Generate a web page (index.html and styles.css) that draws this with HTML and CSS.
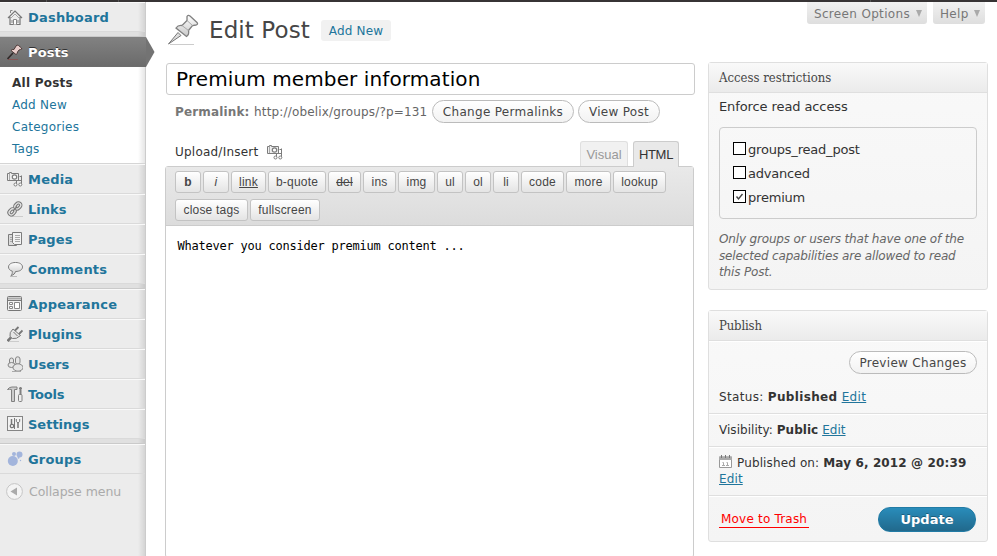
FILE: index.html
```html
<!DOCTYPE html>
<html lang="en">
<head>
<meta charset="utf-8">
<title>Edit Post</title>
<link rel="stylesheet" href="styles.css">
</head>
<body>
<svg class="defs" aria-hidden="true">
  <defs>
    <linearGradient id="metal" x1="0" y1="0" x2="0" y2="1"><stop offset="0" stop-color="#fff"/><stop offset="1" stop-color="#c8c8c8"/></linearGradient>
    <symbol id="media" viewBox="0 0 16 16">
      <path d="M.5 2.500h2v-1h2v1h7v7h-11z" fill="#eee" stroke="#7c7c7c"/>
      <path d="M2.500 3v6" stroke="#aaa"/>
      <circle cx="7.500" cy="6" r="2.200" fill="#fff" stroke="#7c7c7c" stroke-width="1.200"/>
      <path d="M9.500 13.500v-4h5M14.500 13.500v-9M14.500 5.500h-2" fill="none" stroke="#7c7c7c"/>
      <circle cx="8.500" cy="13.500" r="1.500" fill="#fff" stroke="#7c7c7c"/><circle cx="13.300" cy="13.500" r="1.500" fill="#fff" stroke="#7c7c7c"/>
    </symbol>
    <symbol id="pin" viewBox="0 0 32 32">
      <path d="M3 30.500h24" stroke="#ccc"/>
      <path d="M1.500 30L11 18.500l3 3z" fill="#ddd" stroke="#777" stroke-width="1"/>
      <path d="M20 2.500q1-2 3-.500l7 6.500q1.500 2-1 2.500l-3.500.500-4 5q1 4-2 6L9 14q2-3 6-2.500l5-5z" fill="url(#metal)" stroke="#808080" stroke-width="1.300"/>
      <path d="M20 6.500l5.500 5M15 11.500l6.500 5" stroke="#aaa" fill="none"/>
    </symbol>
  </defs>
</svg>
<div class="adminbar"><i></i><i></i><i></i></div>
<div class="wrap">
  <nav class="menu">
    <a class="item"><svg viewBox="0 0 16 16"><path d="M3 8v7.500h10V8M1 9l7-7 7 7" fill="#eee" stroke="#777" stroke-width="1.200"/><path d="M3.500 4V1.500h2" fill="none" stroke="#888"/><path d="M3.500 9.500L8 5l4.500 4.500" fill="none" stroke="#aaa"/><path d="M6.500 15.500v-5h3v5M5 11v3M11 11v3" fill="#fff" stroke="#888"/></svg><span>Dashboard</span></a>
    <div class="sep"></div>
    <a class="item current"><svg viewBox="0 0 16 16"><path d="M1 15.500h10" stroke="#855"/><path d="M.5 15L6 9" stroke="#302828" stroke-width="1.600"/><path d="M9 2q1-1.500 2.500-.500l3 2.500q1 1.500-1 1.500l-1.500.500-1.500 2q0 2-1.500 2.500L4 6.500q1-1.500 3-1z" fill="#e8cdca" stroke="#4d3a38"/></svg><span>Posts</span></a>
    <div class="submenu"><a class="on">All Posts</a><a>Add New</a><a>Categories</a><a>Tags</a></div>
    <a class="item"><svg><use href="#media"/></svg><span>Media</span></a>
    <a class="item tight"><svg viewBox="0 0 16 16"><path d="M3 15.500h13" stroke="#ccc"/><g fill="none" stroke="#777" stroke-width="3.400"><rect x="8.500" y="1.800" width="4.600" height="6.500" rx="2.300" transform="rotate(43 11 5)"/><rect x="2.600" y="7.600" width="4.600" height="6.500" rx="2.300" transform="rotate(43 5 11)"/></g><g fill="none" stroke="#e2e2e2" stroke-width="1.300"><rect x="8.500" y="1.800" width="4.600" height="6.500" rx="2.300" transform="rotate(43 11 5)"/><rect x="2.600" y="7.600" width="4.600" height="6.500" rx="2.300" transform="rotate(43 5 11)"/></g><path d="M6 10l4-4.500" stroke="#777" stroke-width="1.200"/></svg><span>Links</span></a>
    <a class="item"><svg viewBox="0 0 16 16"><path d="M5 3.500H1.500v11h8V13" fill="#ddd" stroke="#7c7c7c"/><path d="M5.500 1.500h9v12h-7l-2-2z" fill="#f3f3f3" stroke="#7c7c7c"/><path d="M8 4.500h5M8 6.500h5M8 8.500h5M8 10.500h5M3 6.500h2M3 8.500h2M3 10.500h2" stroke="#aaa"/></svg><span>Pages</span></a>
    <a class="item"><svg viewBox="0 0 16 16"><path d="M3 15.500h7" stroke="#bbb"/><path d="M8.500 1.500C4 1.500 1.500 3.500 1.500 6c0 2 1.500 3.500 3.800 4.200.2 2-.3 3.300-1.300 4.300 2.500-.4 4-1.800 4.500-4 4.500 0 7-2 7-4.500s-2.500-4.500-7-4.500z" fill="url(#metal)" stroke="#7c7c7c"/></svg><span>Comments</span></a>
    <div class="sep"></div>
    <a class="item"><svg viewBox="0 0 16 16"><rect x=".5" y=".5" width="14" height="14" rx="1" fill="#f2f2f2" stroke="#777"/><path d="M1 2.500h13" stroke="#aaa" stroke-width="2"/><path d="M1 4.500h13" stroke="#777"/><path d="M2.500 6.500h3v2h-3zM2.500 10.500h3v2h-3zM7.500 6.500h5v6h-5z" fill="#fff" stroke="#888"/></svg><span>Appearance</span></a>
    <a class="item tight"><svg viewBox="0 0 16 16"><path d="M1 15.500h11" stroke="#ccc"/><path d="M.5 15L4 11.500" stroke="#777" stroke-width="2.500"/><path d="M6 3l7.500 6.500q-4 4-8 3L3 10.500q-1-4 3-7.500z" fill="#e5e5e5" stroke="#777"/><path d="M8 4.500L11.500 1M12 8l3.500-3.500" stroke="#777" stroke-width="1.800"/><path d="M6.500 6l4 4" stroke="#777"/></svg><span>Plugins</span></a>
    <a class="item tight"><svg viewBox="0 0 16 16"><g fill="#e5e5e5" stroke="#858585"><rect x="2.500" y="2" width="4" height="6" rx="2"/><ellipse cx="4.500" cy="9" rx="3.500" ry="2.500"/><rect x="8.500" y=".8" width="4.500" height="7.500" rx="2.200"/><ellipse cx="11" cy="11.500" rx="5" ry="3.700"/></g><path d="M5 15.500h9" stroke="#aaa"/></svg><span>Users</span></a>
    <a class="item tighter"><svg viewBox="0 0 16 16"><path d="M.5 3.500Q2 1 5 1h5v2.500H7.500v12h-3v-12q-2-.5-4 0z" fill="#ccc" stroke="#808080"/><path d="M13.500 1v8" stroke="#808080" stroke-width="2"/><path d="M12 2.500h3" stroke="#808080"/><rect x="11.500" y="8.500" width="3.500" height="7" rx="1" fill="#eee" stroke="#808080"/></svg><span>Tools</span></a>
    <a class="item tight"><svg viewBox="0 0 16 16"><rect x=".5" y=".5" width="15" height="14" fill="#f2f2f2" stroke="#858585"/><path d="M4.500 3v5M11 7v5" stroke="#777" stroke-width="1.500"/><circle cx="5" cy="10" r="1.700" fill="#fff" stroke="#777" stroke-width="1.300"/><path d="M9.300 3v2.500L11 7l1.700-1.500V3M7.500 2v11" fill="none" stroke="#777"/></svg><span>Settings</span></a>
    <div class="sep"></div>
    <a class="item"><svg viewBox="0 0 16 16"><g fill="#a3b5dc"><circle cx="5.800" cy="10" r="5"/><circle cx="12.500" cy="3.500" r="3"/><circle cx="7" cy="3" r="2"/><circle cx="11.500" cy="6.800" r="1"/><circle cx="13.500" cy="9.500" r=".7"/></g></svg><span>Groups</span></a>
    <a class="collapse"><svg viewBox="0 0 17 17"><circle cx="8.500" cy="8.500" r="7.900" fill="#f4f4f4" stroke="#c5c5c5"/><path d="M4.500 8.500L11 4.500v8z" fill="#aaa"/></svg><span>Collapse menu</span></a>
  </nav>
  <svg class="arrow" viewBox="0 0 9 30"><path d="M0 0l8.500 15L0 30z" fill="#737373"/></svg>

  <main class="main">
    <header class="head"><svg><use href="#pin"/></svg><h1>Edit Post</h1><a class="addnew">Add New</a></header>
    <div class="title"><span>Premium member information</span></div>
    <div class="permalink"><b>Permalink:</b><span class="url">http://obelix/groups/?p=131</span><a class="pill change">Change Permalinks</a><a class="pill view">View Post</a></div>
    <div class="tools"><span class="upload">Upload/Insert</span><svg><use href="#media"/></svg><a class="tab visual">Visual</a><a class="tab html">HTML</a></div>
    <section class="editor">
      <div class="toolbar">
        <a class="w26"><b>b</b></a><a class="w26"><em>i</em></a><a class="w35"><u>link</u></a><a class="w58">b-quote</a><a class="w33"><s>del</s></a><a class="w33">ins</a><a class="w37">img</a><a class="w26">ul</a><a class="w26">ol</a><a class="w26">li</a><a class="w43">code</a><a class="w45">more</a><a class="w53">lookup</a><a class="w73">close tags</a><a class="w70">fullscreen</a>
      </div>
      <div class="text">Whatever you consider premium content ...</div>
    </section>
  </main>

  <aside class="side">
    <div class="screen"><a class="so">Screen Options<i></i></a><a class="help">Help<i></i></a></div>
    <section class="box access">
      <h3>Access restrictions</h3>
      <p class="enforce">Enforce read access</p>
      <div class="caps">
        <label><i></i><span>groups_read_post</span></label>
        <label><i></i><span>advanced</span></label>
        <label><i><svg viewBox="0 0 11 11"><path d="M2.500 5.500l2 2.500L8.500 3" fill="none" stroke="#444" stroke-width="1.400"/></svg></i><span>premium</span></label>
      </div>
      <p class="note">Only groups or users that have one of the<br>selected capabilities are allowed to read<br>this Post.</p>
    </section>
    <section class="box publish">
      <h3>Publish</h3>
      <div class="preview"><a class="pill">Preview Changes</a></div>
      <div class="row status">Status: <b>Published</b> <a>Edit</a></div>
      <div class="row visibility">Visibility: <b>Public</b> <a>Edit</a></div>
      <div class="row date"><svg viewBox="0 0 13 13"><path d="M.5 2h12v10.500H.5z" fill="#fff" stroke="#999"/><path d="M0 1.500h13V5H0z" fill="#aaa"/><path d="M2.500 0v3M6.500 0v3M10.500 0v3" stroke="#777"/><path d="M3.500 7.500h1v3M3 10.500h3M7.500 7.500h1v3M7 10.500h3" fill="none" stroke="#aaa"/></svg><span>Published on: <b>May 6, 2012 @ 20:39</b></span><br><a>Edit</a></div>
      <div class="actions"><a class="trash">Move to Trash</a><a class="update">Update</a></div>
    </section>
  </aside>
</div>
</body>
</html>
```
FILE: styles.css
```css
* { box-sizing: border-box; }
body { margin: 0; width: 997px; height: 556px; overflow: hidden; background: #fff; color: #333; font: 13px "DejaVu Sans", sans-serif; }
h1, h3, p { margin: 0; font-weight: normal; }
a, span { white-space: nowrap; }
.defs { position: absolute; width: 0; height: 0; }
.adminbar { height: 2px; background: #373435; display: flex; }
.adminbar i { border-right: 1px solid #555; width: 47px; }
.adminbar i:nth-child(2) { width: 72px; }
.adminbar i:nth-child(3) { width: 752px; }
.wrap { display: flex; height: 554px; position: relative; }

.menu { width: 146px; flex: none; background: linear-gradient(to right, transparent 138px, rgba(0,0,0,.1)) #ececec; border-right: 1px solid #ccc; }
.item { display: flex; align-items: center; height: 30px; padding-left: 7px; border-top: 1px solid #f9f9f9; border-bottom: 1px solid #dadada; color: #21759b; font-weight: bold; letter-spacing: .2px; }
.tight { letter-spacing: 0; }
.tighter { letter-spacing: -.2px; }
.item svg { width: 16px; height: 16px; margin-right: 5px; flex: none; }
.sep { height: 5px; background: rgba(0,0,0,.05); border-bottom: 1px solid #cacaca; }
.item.current { background: linear-gradient(#818181, #6b6b6b); border-color: #808080 transparent #6d6d6d; color: #fff; text-shadow: 0 -1px 0 #333; margin-right: -1px; letter-spacing: .1px; }
.arrow { position: absolute; left: 146px; top: 35px; width: 9px; height: 30px; }
.submenu { height: 97px; padding: 5px 0 0 12px; border-bottom: 1px solid #d5d5d5; background: linear-gradient(to right, transparent 138px, rgba(0,0,0,.1)) #fff; font-size: 12px; letter-spacing: .25px; }
.submenu a { display: block; height: 22px; line-height: 23px; color: #21759b; }
.submenu .on { color: #333; font-weight: bold; }
.collapse { display: flex; align-items: center; height: 34px; padding-left: 6px; color: #aaa; letter-spacing: -.05px; font-size: 12.500px; }
.collapse svg { width: 17px; height: 17px; margin-right: 6px; }

.main { width: 549px; margin-left: 19px; flex: none; display: flex; flex-direction: column; }
.main > * { flex: none; }
.head { height: 61px; padding: 12px 0 0 2px; display: flex; }
.head svg { width: 32px; height: 32px; margin-right: 10px; }
h1 { font-size: 23px; line-height: 32px; color: #464646; width: 112px; letter-spacing: .1px; }
.addnew { height: 21px; width: 70px; margin-top: 6px; border-radius: 3px; background: #f1f1f1; color: #21759b; font-size: 12px; line-height: 22px; text-align: center; letter-spacing: .2px; }
.title { width: 529px; height: 32px; margin-left: 1px; border: 1px solid #ccc; border-radius: 3px; color: #000; font-size: 20px; line-height: 30px; padding-left: 9px; letter-spacing: .11px; }
.permalink { display: flex; align-items: center; height: 32px; padding-left: 10px; color: #666; font-size: 12px; line-height: 18px; }
.permalink b { color: #777; width: 79px; letter-spacing: .15px; padding-top: 1px; }
.url { width: 178px; letter-spacing: .16px; padding-top: 1px; }
.pill { display: block; height: 23px; border: 1px solid #bbb; border-radius: 12px; background: linear-gradient(#fff, #f2f2f2); color: #464646; font-size: 12px; line-height: 22px; text-align: center; letter-spacing: .3px; }
.change { width: 142px; margin-right: 4px; }
.view { width: 82px; }
.tools { height: 39px; display: flex; padding: 12px 15px 0 10px; }
.upload { width: 92px; line-height: 26px; font-size: 12px; letter-spacing: .22px; }
.tools svg { width: 16px; height: 16px; margin-top: 5px; }
.tab { font: 13px/29px "Liberation Sans", sans-serif; height: 26px; margin-top: 2px; text-align: center; border: 1px solid #dfdfdf; border-bottom: 0; border-radius: 3px 3px 0 0; background: #f1f1f1; color: #999; line-height: 26px; }
.visual { margin-left: 297px; width: 48px; height: 25px; }
.html { width: 46px; margin-left: 5px; background: #e9e9e9; color: #333; border-color: #ccc; position: relative; z-index: 1; letter-spacing: -.3px; }
.editor { width: 529px; height: 392px; border: 1px solid #ccc; border-radius: 3px; }
.toolbar { height: 59px; display: flex; flex-wrap: wrap; align-content: flex-start; gap: 6px 2px; padding: 4px 9px; background: linear-gradient(#e9e9e9, #dcdcdc); border-bottom: 1px solid #ccc; }
.toolbar a { height: 22px; border: 1px solid #c3c3c3; border-radius: 3px; background: linear-gradient(#fff, #e4e4e4); font: 12px/20px "Liberation Sans", sans-serif; color: #464646; text-align: center; letter-spacing: .2px; }
.w26 { width: 26px; } .w33 { width: 33px; } .w35 { width: 35px; } .w37 { width: 37px; } .w43 { width: 43px; } .w45 { width: 45px; } .w53 { width: 53px; } .w58 { width: 58px; } .w70 { width: 70px; } .w73 { width: 73px; }
.text { padding: 12px 11.500px; font: 12px/16px "DejaVu Sans Mono", monospace; letter-spacing: -.225px; color: #000; }

.side { width: 283px; margin-left: -6px; flex: none; }
.screen { display: flex; justify-content: flex-end; height: 60px; gap: 6px; padding-right: 6px; }
.screen a { height: 22px; background: linear-gradient(#f1f1f1, #dedede); border-radius: 0 0 3px 3px; color: #777; line-height: 24px; font-size: 12px; letter-spacing: .33px; padding-left: 7px; display: flex; }
.so { width: 120px; } .help { width: 52px; }
.screen i { margin: 8px 5px 0 auto; border: 3.500px solid transparent; border-top: 7px solid #aaa; border-bottom: 0; height: 0; }
.box { width: 280px; border: 1px solid #dfdfdf; border-radius: 3px; background: linear-gradient(#f9f9f9, #f4f4f4); }
h3 { height: 30px; border-bottom: 1px solid #dfdfdf; background: linear-gradient(#f9f9f9, #ebebeb); font: 13px/30px "DejaVu Serif", serif; font-stretch: condensed; color: #464646; padding-left: 10px; }
.publish h3 { letter-spacing: -.15px; }
.access { height: 228px; margin-bottom: 20px; }
.enforce { padding-left: 10px; line-height: 28px; letter-spacing: -.1px; }
.caps { margin: 6px 10px 0; height: 92px; border: 1px solid #ccc; border-radius: 4px; padding: 9px 13px; letter-spacing: -.2px; }
.caps label { display: flex; height: 24px; align-items: center; }
.caps i { width: 13px; height: 13px; border: 1px solid #000; background: #fff; margin: -1px 2px 0 0; display: flex; }
.note { padding: 12px 0 0 10px; font-style: italic; font-size: 12px; line-height: 16.500px; color: #666; letter-spacing: -.16px; white-space: nowrap; }
.publish { height: 232px; }
.preview { height: 41px; padding: 9px 10px 0 0; border-top: 1px solid #fff; display: flex; justify-content: flex-end; }
.preview .pill { width: 128px; }
.row { padding-left: 10px; font-size: 12px; border-bottom: 1px solid #dfdfdf; box-shadow: 0 1px #fff; height: 33px; line-height: 32px; letter-spacing: .04px; }
.status { height: 32px; line-height: 30px; letter-spacing: .34px; }
.row a { color: #21759b; text-decoration: underline; }
.date { height: 49px; line-height: 16px; padding-top: 8px; letter-spacing: .13px; }
.date svg { width: 13px; height: 13px; margin-right: 5px; vertical-align: -1px; }
.actions { display: flex; justify-content: space-between; padding: 11px 11px 0 10px; }
.trash { color: #f00; border-bottom: 1px solid #f00; height: 21px; line-height: 24px; width: 90px; padding-left: 2px; font-size: 12px; letter-spacing: .2px; }
.update { width: 98px; height: 25px; border-radius: 12px; background: linear-gradient(#298cba, #21698c); border: 1px solid #217ba5; color: #fff; font-weight: bold; line-height: 23px; text-align: center; text-shadow: 0 -1px 0 rgba(0,0,0,.3); }
```
